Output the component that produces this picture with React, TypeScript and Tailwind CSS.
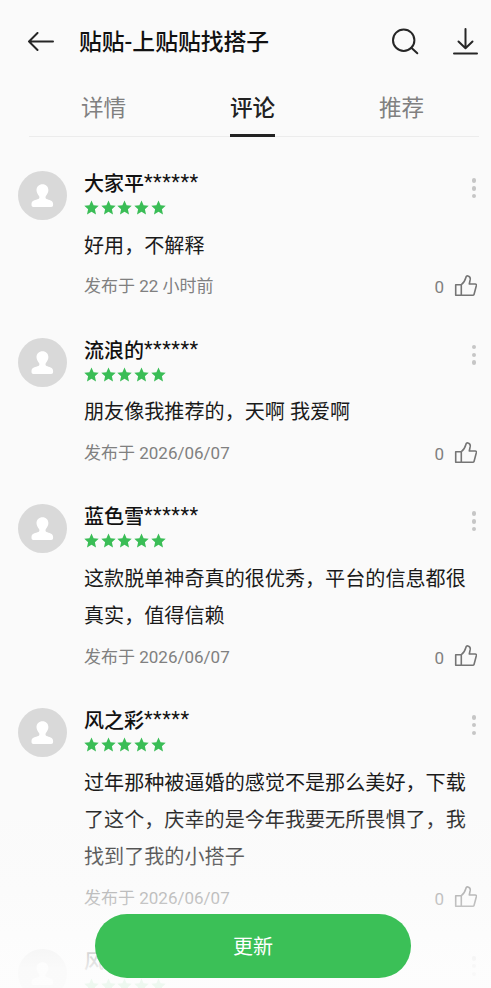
type Review = {
  name: string;
  mask: string;
  lines: string[];
  date?: string;
};

const reviews: Review[] = [
  { name: "大家平", mask: "******", lines: ["好用，不解释"], date: "22 小时前" },
  { name: "流浪的", mask: "******", lines: ["朋友像我推荐的，天啊 我爱啊"], date: "2026/06/07" },
  { name: "蓝色雪", mask: "******", lines: ["这款脱单神奇真的很优秀，平台的信息都很", "真实，值得信赖"], date: "2026/06/07" },
  {
    name: "风之彩",
    mask: "*****",
    lines: ["过年那种被逼婚的感觉不是那么美好，下载", "了这个，庆幸的是今年我要无所畏惧了，我", "找到了我的小搭子"],
    date: "2026/06/07",
  },
  { name: "风", mask: "", lines: [] },
];

function Avatar() {
  return (
    <svg className="size-[49px] shrink-0" viewBox="0 0 49 49">
      <circle cx="24.5" cy="24.5" r="24.5" fill="#d9d9d9" />
      <path
        d="M24.500 13.200c3.500 0 5.900 2.400 5.900 5.900 0 2.500-1.300 4.400-2.500 5.800-.7.900-.5 2.700.6 3.200 2.300 1 6.600 1.100 6.600 5v.9c0 1.200-.7 2-1.900 2H15.400c-1.200 0-1.900-.8-1.900-2v-.9c0-3.900 4.300-4 6.900-5 1.100-.5 1.300-2.300.6-3.200-1.200-1.400-2.500-3.300-2.500-5.800 0-3.500 2.500-5.900 6-5.900Z"
        fill="#fff"
      />
    </svg>
  );
}

function Star() {
  return (
    <svg className="h-[15px] w-[15px]" viewBox="0 0 15 15" fill="#3abd56">
      <path d="M7.500.4l2.100 4.800 5.100.5-3.800 3.500 1.100 5.200-4.500-2.700L3 14.400l1.100-5.200L.3 5.700l5.100-.5z" />
    </svg>
  );
}

function ThumbUp() {
  return (
    <svg className="mb-[4px] h-6 w-6" viewBox="0 0 24 24" fill="none" stroke="#757575" strokeWidth="1.600" strokeLinejoin="round">
      <path d="M2.700 11.700h5.600v10.600H2.700z" />
      <path d="M8.300 11.700c2.200-1.400 3.600-3.600 4.500-6.900.4-1.500 1-2.200 2.100-1.900 1.900.5 2.600 1.700 2.300 3.500l-.9 4.600h5.900c1 0 1.400.6 1.200 1.500l-2.300 8.700c-.2.700-.7 1.100-1.500 1.100H8.300" />
    </svg>
  );
}

function ReviewItem({ review }: { review: Review }) {
  return (
    <div className="flex pb-[38.800px]">
      <Avatar />
      <div className="ml-[17px] flex-1">
        <div className="flex h-[56.600px] justify-between">
          <div>
            <h3 className="h-[29px] pt-[1px] text-[20px] leading-6 font-medium whitespace-nowrap text-[#111]">
              {review.name}
              <span className="inline-block -translate-y-[2px] font-normal tracking-[0.500px]">{review.mask}</span>
            </h3>
            <div className="flex gap-[1.700px]">
              <Star />
              <Star />
              <Star />
              <Star />
              <Star />
            </div>
          </div>
          <div className="mt-[7px] mr-[1px] flex h-[20px] flex-col justify-between">
            <span className="size-[4.500px] rounded-full bg-[#c6c6c6]" />
            <span className="size-[4.500px] rounded-full bg-[#c6c6c6]" />
            <span className="size-[4.500px] rounded-full bg-[#c6c6c6]" />
          </div>
        </div>
        {review.lines.map((line) => (
          <p key={line} className="h-[37.200px] text-[20.100px] leading-[37.200px] whitespace-nowrap text-[#1a1a1a]">
            {line}
          </p>
        ))}
        {review.date && (
          <div className="mt-[10px] flex h-[24px] items-center justify-between text-[17px] text-[#808080]">
            <span>发布于 {review.date}</span>
            <span className="flex items-center gap-[9px]">
              <span className="pt-[2px]">0</span>
              <ThumbUp />
            </span>
          </div>
        )}
      </div>
    </div>
  );
}

export default function App() {
  return (
    <div className="relative h-[988px] w-[491px] overflow-hidden bg-[#fafafa] font-[Roboto,'Noto_Sans_CJK_SC',sans-serif]">
      {/* Header */}
      <header className="flex h-[83px] items-center pr-[13px] pl-[27px]">
        <svg className="h-5 w-[27px]" viewBox="0 0 27 20" fill="none" stroke="#262626" strokeWidth="2" strokeLinecap="round" strokeLinejoin="round">
          <path d="M26 9.500H2M10.500 1L2 9.500l8.500 8.500" />
        </svg>
        <h1 className="ml-[25px] pt-[2px] text-[22.800px] leading-8 font-medium text-[#111]">贴贴-上贴贴找搭子</h1>
        <svg className="ml-auto h-7 w-7" viewBox="0 0 28 28" fill="none" stroke="#262626" strokeWidth="2" strokeLinecap="round">
          <circle cx="12.700" cy="12.200" r="10.700" />
          <path d="M20.300 19.700l6 5.600" />
        </svg>
        <svg className="ml-[33px] h-7 w-[26px]" viewBox="0 0 26 28" fill="none" stroke="#262626" strokeWidth="2" strokeLinecap="round" strokeLinejoin="round">
          <path d="M13.500 1v19M6.500 13.500l7 6.700 7-6.700M2 25.500h23" />
        </svg>
      </header>

      {/* Tabs */}
      <nav className="mr-[12px] ml-[29px] flex h-[54px] border-b border-[#ececec] text-[22.600px] leading-[51px] text-[#808080]">
        <div className="w-[149px] text-center">详情</div>
        <div className="flex w-[149px] justify-center">
          <div className="h-[54px] border-b-[3px] border-[#222] font-medium text-[#222]">评论</div>
        </div>
        <div className="w-[149px] text-center">推荐</div>
      </nav>

      {/* Reviews */}
      <main className="pt-[34.300px] pr-[14px] pl-[18px]">
        {reviews.map((review) => (
          <ReviewItem key={review.name} review={review} />
        ))}
      </main>

      {/* Update button */}
      <div className="absolute inset-x-0 bottom-0 flex h-[188px] items-end justify-center bg-linear-to-b from-[#fafafa]/0 via-[#fcfcfc]/45 via-45% to-[#fdfdfd]/92 to-90%">
        <button className="ml-[15px] mb-[10px] h-[64px] w-[316px] rounded-full bg-[#3bc057] pt-[2px] text-[20px] text-white">更新</button>
      </div>
    </div>
  );
}
